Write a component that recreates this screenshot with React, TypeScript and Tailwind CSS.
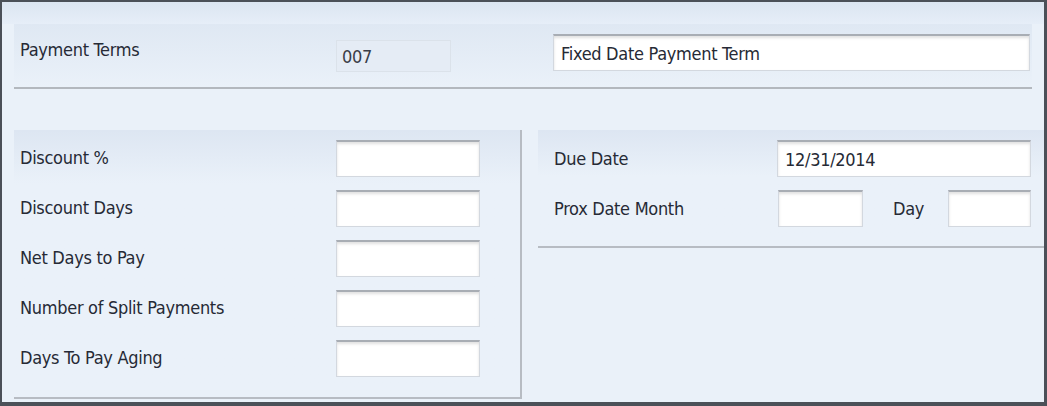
import React from 'react';

const font = "font-['DejaVu_Sans_Condensed','Liberation_Sans',sans-serif]";

const Field: React.FC<{ value?: string; className?: string }> = ({ value, className }) => (
    <div
        className={`h-[37px] bg-white border border-[#d3d8df] border-t-[#a8adb4] border-t-2 shadow-[inset_0_2px_3px_rgba(0,0,0,0.12)] flex items-center px-[7px] text-[18px] tracking-[-0.3px] text-[#262a35] ${className ?? ''}`}
    >
        {value}
    </div>
);

const Label: React.FC<{ text: string; className?: string }> = ({ text, className }) => (
    <div className={`text-[18px] tracking-[-0.3px] text-[#262a35] leading-none ${className ?? ''}`}>{text}</div>
);

const leftRows = ['Discount %', 'Discount Days', 'Net Days to Pay', 'Number of Split Payments', 'Days To Pay Aging'];

export default function App() {
    return (
        <div className={`w-[1047px] h-[406px] box-border border-l-2 border-t-2 border-r-[3px] border-b-[4px] border-[#4b5058] bg-[#eaf1f9] flex flex-col ${font}`}>
            {/* top strip */}
            <div className="h-[22px] bg-gradient-to-b from-[#dbe5f1] to-[#e6eef8]" />

            {/* header section */}
            <div className="ml-[12px] mr-[12px] flex flex-col">
                <div className="h-[63px] flex items-start bg-gradient-to-b from-[#dfe8f3] to-[#eaf1f9]">
                    <Label text="Payment Terms" className="w-[322px] pl-[6px] mt-[17px]" />
                    <div className="w-[115px] h-[32px] mt-[16px] bg-[#e5ecf5] border border-[#dbe2ea] flex items-center px-[5px] text-[18px] tracking-[-0.3px] text-[#3a3e48]">
                        007
                    </div>
                    <div className="w-[102px]" />
                    <Field value="Fixed Date Payment Term" className="w-[477px] h-[36px] mt-[10px]" />
                </div>
                <div className="h-[2px] bg-[#b3b8be]" />
            </div>

            {/* lower panels */}
            <div className="flex mt-[41px] flex-1">
                <div className="ml-[12px] w-[508px] border-r-2 border-b-2 border-[#b7bcc3] mb-[3px] bg-gradient-to-b from-[#dde6f2] via-[#eaf1f9] via-[20%] to-[#eaf1f9] flex flex-col gap-[13px] pt-[10px]">
                    {leftRows.map((r) => (
                        <div key={r} className="flex items-center h-[37px]">
                            <Label text={r} className="w-[322px] pl-[6px] -mt-[2px]" />
                            <Field className="w-[144px]" />
                        </div>
                    ))}
                </div>

                <div className="ml-[16px] flex-1 flex flex-col">
                    <div className="bg-gradient-to-b from-[#dde6f2] via-[#eaf1f9] via-[40%] to-[#eaf1f9] flex flex-col gap-[13px] pt-[10px] pl-[16px] pr-[13px] pb-[19px] border-b-2 border-[#b7bcc3]">
                        <div className="flex items-center h-[37px]">
                            <Label text="Due Date" className="w-[223px]" />
                            <Field value="12/31/2014" className="flex-1" />
                        </div>
                        <div className="flex items-center h-[37px]">
                            <Label text="Prox Date Month" className="w-[224px]" />
                            <Field className="w-[85px]" />
                            <Label text="Day" className="w-[55px] pl-[30px] box-content" />
                            <Field className="flex-1" />
                        </div>
                    </div>
                </div>
            </div>
        </div>
    );
}
